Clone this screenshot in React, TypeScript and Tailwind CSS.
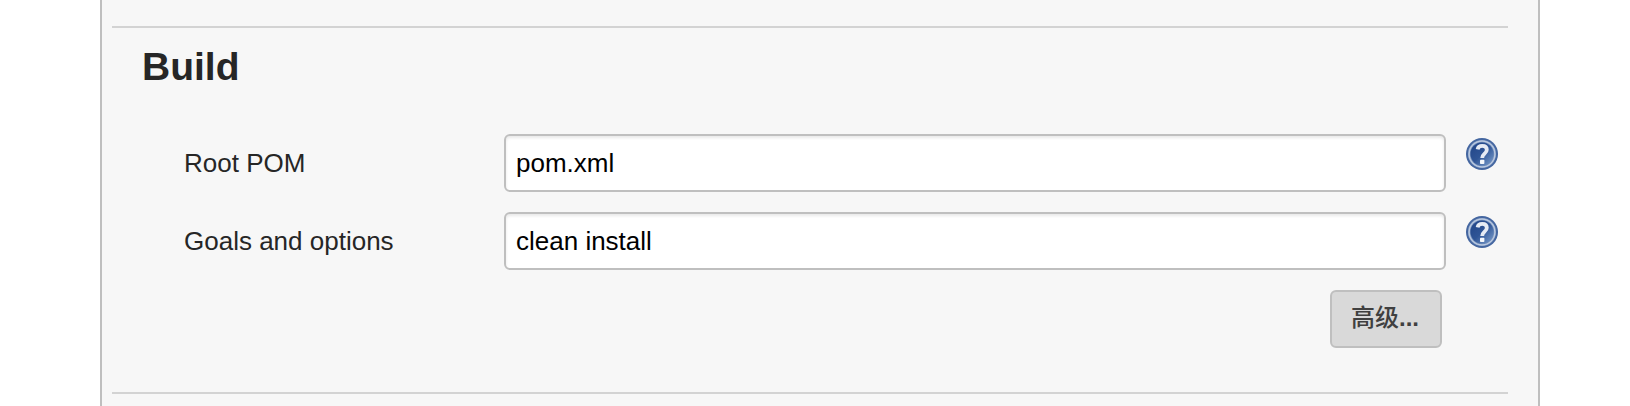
import { useId, useState } from 'react';

function HelpIcon() {
  const id = useId();
  return (
    <svg viewBox="0 0 32 32" className="block size-8">
      <defs>
        <linearGradient id={id} x1="0" y1="0" x2="1" y2="1">
          <stop offset="0.1" stopColor="#24488a" />
          <stop offset="0.5" stopColor="#2f5596" />
          <stop offset="1" stopColor="#7c9fce" />
        </linearGradient>
      </defs>
      <circle cx="16" cy="16" r="16" fill="#4466a0" />
      <circle cx="16" cy="16" r="14" fill="#8da5ca" />
      <circle cx="16" cy="16" r="13.5" fill="#bccae0" />
      <circle cx="16" cy="16" r="12.2" fill="#6f8cba" />
      <circle cx="16" cy="16" r="11.5" fill={`url(#${id})`} />
      <path
        d="M11.6 11.4C12 8.9 13.8 7.9 16.2 7.9c2.9 0 4.6 1.5 4.6 3.9 0 4-4.6 3.8-4.6 8.2"
        fill="none"
        stroke="#e6ebf4"
        strokeWidth="3.8"
      />
      <rect x="14" y="21.8" width="4.4" height="4.2" rx="0.8" fill="#f4f7fb" />
    </svg>
  );
}

function Field({ label, initial }: { label: string; initial: string }) {
  const [value, setValue] = useState(initial);
  return (
    <div className="flex h-[58px] items-start pl-[82px]">
      <label className="w-80 pt-[14px] text-[26px] leading-[30px] text-[#262626]">{label}</label>
      <input
        aria-label={label}
        value={value}
        onChange={(e) => setValue(e.target.value)}
        className="h-[58px] w-[942px] rounded-md border-2 border-[#bfbfbf] bg-white px-[10px] pt-0 pb-0 text-[26px] leading-[30px] text-black shadow-[inset_0_2px_3px_rgba(0,0,0,0.09)] outline-none"
      />
      <button aria-label="Help" className="mt-1 ml-5">
        <HelpIcon />
      </button>
    </div>
  );
}

export default function App() {
  return (
    <div className="h-[406px] w-[1630px] overflow-hidden bg-white pl-[100px] font-['Liberation_Sans','Noto_Sans_CJK_SC',sans-serif]">
      <section className="flex h-full w-[1440px] flex-col border-x-2 border-[#bfbfbf] bg-[#f7f7f7] pt-[26px]">
        <hr className="mr-[30px] ml-[10px] h-0.5 border-0 bg-[#d3d3d3]" />
        <h2 className="mt-[17px] ml-10 text-[39px] leading-[44px] font-bold text-[#262626]">Build</h2>
        <div className="mt-[45px] flex flex-col gap-5">
          <Field label="Root POM" initial="pom.xml" />
          <Field label="Goals and options" initial="clean install" />
        </div>
        <div className="mt-5 flex justify-end pr-24">
          <button className="h-[58px] w-28 rounded-md border-2 border-[#bfbfbf] bg-[#d9d9d9] pr-0.5 pb-0.5 text-[24px] leading-[30px] font-bold text-[#404040]">
            <span className="font-medium">高级</span>...
          </button>
        </div>
        <hr className="mt-11 mr-[30px] ml-[10px] h-0.5 border-0 bg-[#d3d3d3]" />
      </section>
    </div>
  );
}
